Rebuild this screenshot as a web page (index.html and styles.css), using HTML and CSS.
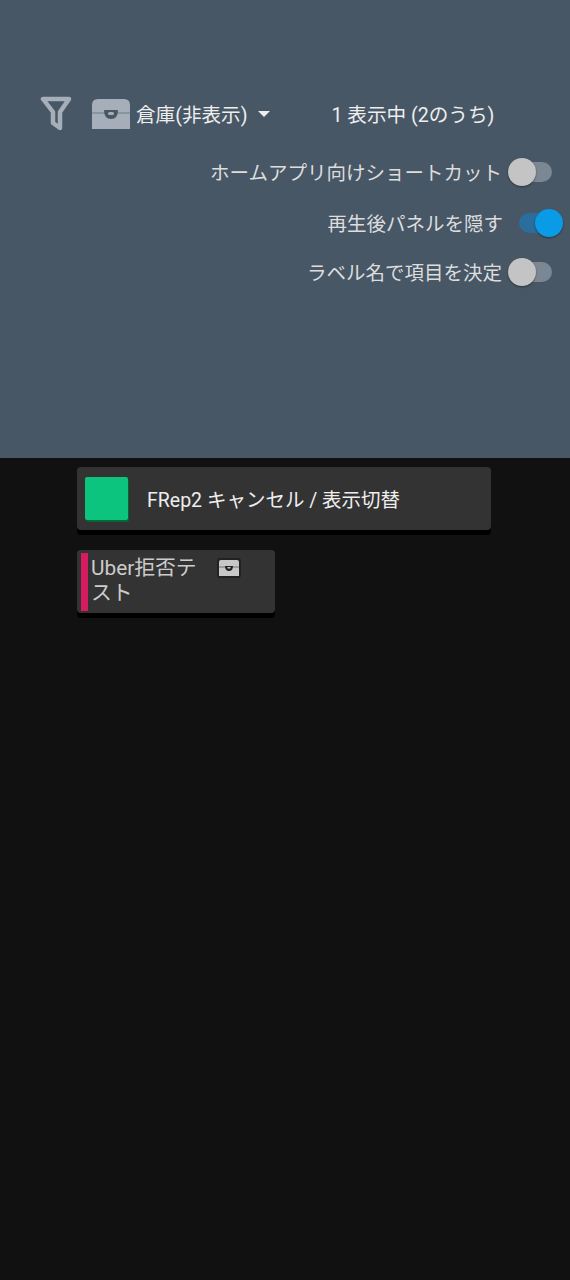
FILE: index.html
```html
<!DOCTYPE html>
<html lang="ja">
<head>
  <meta charset="UTF-8">
  <title>倉庫</title>
  <link rel="stylesheet" href="styles.css">
</head>
<body>
  <section class="panel">
    <div class="filter-row">
      <svg class="filter-icon" width="32" height="36" viewBox="0 0 32 36">
        <path d="M3 3H29L20 16V32L13 27V16Z" fill="none" stroke="#a5aeb9" stroke-width="4.5" stroke-linejoin="round"/>
      </svg>
      <svg class="chest-icon" width="38" height="32" viewBox="0 0 38 32">
        <path d="M6 1H32Q38 1 38 7V31H0V7Q0 1 6 1Z" fill="#a5aeb9"/>
        <path d="M0 15H38" stroke="#7f8b97" stroke-width="1.5"/>
        <path d="M12 12H26Q26 21 19 21T12 12Z" fill="#475766"/>
        <rect x="16" y="14" width="6" height="3" rx="1.5" fill="#a5aeb9"/>
      </svg>
      <span class="store-name">倉庫(非表示)</span>
      <span class="caret"></span>
      <span class="count">1 表示中 (2のうち)</span>
    </div>

    <div class="option first">
      <span>ホームアプリ向けショートカット</span>
      <span class="switch"><span class="knob"></span></span>
    </div>
    <div class="option second">
      <span>再生後パネルを隠す</span>
      <span class="switch on"><span class="knob"></span></span>
    </div>
    <div class="option third">
      <span>ラベル名で項目を決定</span>
      <span class="switch"><span class="knob"></span></span>
    </div>
  </section>

  <main class="list">
    <div class="card wide">
      <span class="swatch"></span>
      <span class="card-title">FRep2 キャンセル / 表示切替</span>
    </div>
    <div class="card small">
      <span class="stripe"></span>
      <span class="small-title">Uber拒否テスト</span>
      <svg class="small-chest" width="24" height="20" viewBox="0 0 24 20">
        <rect x="0" y="0" width="24" height="20" rx="3" fill="#222"/>
        <path d="M4 2H20Q22 2 22 4V18H2V4Q2 2 4 2Z" fill="#c8c8c8"/>
        <path d="M2 9H22" stroke="#777" stroke-width="1"/>
        <path d="M8 8H16Q16 13 12 13T8 8Z" fill="#222"/>
        <rect x="10.5" y="9" width="3" height="1.5" fill="#c8c8c8"/>
      </svg>
    </div>
  </main>
</body>
</html>
```

FILE: styles.css
```css
* {
  box-sizing: border-box;
}

body {
  margin: 0;
  height: 1280px;
  background-color: #111;
  color: #eee;
  font-family: Roboto, "Noto Sans CJK JP", sans-serif;
  overflow: hidden;
}

.panel {
  height: 458px;
  background-color: #475766;
  padding-top: 96px;
}

.filter-row {
  display: flex;
  align-items: center;
  height: 36px;
  padding-left: 40px;
  font-size: 19.6px;
}

.chest-icon {
  margin-left: 20px;
}

.store-name {
  position: relative;
  top: -1px;
  margin-left: 6px;
}

.caret {
  margin-left: 10px;
  border-left: 6px solid transparent;
  border-right: 6px solid transparent;
  border-top: 6px solid #eee;
}

.count {
  position: relative;
  top: -1px;
  margin-left: 62px;
}

.option {
  display: flex;
  justify-content: flex-end;
  align-items: center;
  height: 30px;
  padding-right: 18px;
  font-size: 19.5px;
  color: #ddd;
}

.option > span:first-child {
  position: relative;
  top: -1px;
}

.first {
  margin-top: 25px;
}

.second {
  margin-top: 21px;
  padding-right: 13px;
}

.third {
  margin-top: 19px;
}

.switch {
  display: block;
  position: relative;
  width: 42px;
  height: 20px;
  margin-left: 8px;
  border-radius: 10px;
  background-color: #7b8792;
}

.knob {
  position: absolute;
  left: -2px;
  top: -4px;
  width: 28px;
  height: 28px;
  border-radius: 50%;
  background-color: #c4c4c4;
  box-shadow: 0 1px 2px rgba(0, 0, 0, 0.4);
}

.switch.on {
  background-color: #2b6d9c;
  width: 38px;
  margin-left: 16px;
}

.on .knob {
  left: auto;
  right: -6px;
  background-color: #0a9be6;
}

.list {
  padding: 9px 0 0 77px;
}

.card {
  display: flex;
  background-color: #333;
  border-radius: 4px;
  box-shadow: 0 5px 0 #000;
}

.wide {
  width: 414px;
  height: 63px;
  align-items: center;
  padding-left: 8px;
}

.swatch {
  width: 43px;
  height: 43px;
  margin-top: -1px;
  border-radius: 2px;
  background-color: #0cc47e;
  box-shadow: 1px 2px 0 #063;
}

.card-title {
  margin-left: 19px;
  font-size: 19.5px;
  color: #eee;
}

.small {
  width: 198px;
  height: 63px;
  margin-top: 20px;
  padding: 3px 0 0 4px;
}

.stripe {
  flex: none;
  width: 7px;
  height: 58px;
  background-color: #d81b60;
}

.small-title {
  width: 112px;
  height: 50px;
  margin: 3px 0 0 3px;
  font-size: 20.8px;
  line-height: 25px;
  color: #ccc;
}

.small-chest {
  margin: 5px 0 0 14px;
}
```
